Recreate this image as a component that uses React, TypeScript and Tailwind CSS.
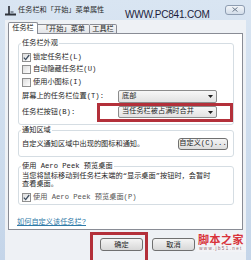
import React from "react";

const SONG = "font-['Liberation_Mono','Noto_Sans_CJK_SC',monospace]";
const UI = "font-['Noto_Sans_CJK_SC','Noto_Sans',sans-serif]";

function Check({ checked }: { checked?: boolean }) {
  return (
    <span className="w-[9px] h-[9px] border border-[#8f8f8f] bg-linear-to-br from-[#dcdcdc] to-white flex items-center justify-center shrink-0">
      {checked && (
        <svg width="7" height="7" viewBox="0 0 7 7">
          <path d="M0.8 3.6 L2.7 5.6 L6.2 1" stroke="#3d4d60" strokeWidth="1.3" fill="none" />
        </svg>
      )}
    </span>
  );
}

function Combo({ text }: { text: string }) {
  return (
    <div className="w-[99px] h-full border border-[#8c8c8c] rounded-[2px] bg-linear-to-b from-[#f7f7f7] to-[#e2e2e2] flex items-center pl-[3px] pr-[3px]">
      <span className="flex-1 leading-none">{text}</span>
      <svg width="5" height="3" viewBox="0 0 5 3">
        <path d="M0 0 H5 L2.5 3 Z" fill="#1e1e1e" />
      </svg>
    </div>
  );
}

function Group({ label, className, children }: { label: string; className: string; children: React.ReactNode }) {
  return (
    <div className={"relative border border-[#d5dde3] rounded-[3px] " + className}>
      <span className="absolute left-[2px] -top-[5px] bg-white px-[1px] leading-[9px] whitespace-nowrap">{label}</span>
      {children}
    </div>
  );
}

export default function App() {
  return (
    <div className={"relative w-[251px] h-[260px] overflow-hidden bg-linear-to-b from-[#d9e5f2] to-[#c4d5e9] flex flex-col text-[7.2px] text-[#1e1e1e] " + SONG}>
      {/* title bar */}
      <div className="h-[20px] shrink-0 flex items-center pl-[5px] pr-[6px]">
        <svg width="11" height="11" viewBox="0 0 11 11" className="shrink-0">
          <rect x="3" y="1" width="2" height="8" fill="#4a4f58" />
          <rect x="0" y="8.5" width="11" height="2" fill="#2f343c" />
          <rect x="5.5" y="6" width="3" height="2.5" fill="#8a95a3" />
        </svg>
        <span className={"ml-[2px] text-[7.2px] text-[#2a2a2a] leading-none " + UI}>任务栏和「开始」菜单属性</span>
        <span className="absolute left-[125px] top-[10px] text-[10px] leading-none text-[#1c1c3a] font-['Liberation_Sans',sans-serif] tracking-[-0.2px]">
          WWW.PC841.COM
        </span>
        <div className="ml-auto w-[20px] h-[10px] mt-[-1px] rounded-[3px] border border-[#8e9db1] bg-linear-to-b from-[#f2f5f9] to-[#d3dde9] flex items-center justify-center">
          <svg width="6" height="5" viewBox="0 0 6 5">
            <path d="M0.5 0.5 L5.5 4.5 M5.5 0.5 L0.5 4.5" stroke="#6c7a8c" strokeWidth="1" />
          </svg>
        </div>
      </div>

      {/* dialog body */}
      <div className="flex-1 mx-[5px] bg-[#eef1f5] px-[3px] pt-[2px] flex flex-col">
        {/* tabs */}
        <div className={"flex items-end h-[12px] -mb-[1px] relative z-10 " + UI}>
          <div className="w-[30px] h-[12px] bg-white border border-b-0 border-[#898c95] rounded-t-[2px] flex items-center justify-center leading-none pb-[1px]">
            任务栏
          </div>
          <div className="w-[52px] h-[10px] bg-linear-to-b from-[#f5f5f5] to-[#e2e4e8] border border-l-0 border-[#898c95] rounded-tr-[2px] flex items-center justify-center leading-none">
            「开始」菜单
          </div>
          <div className="w-[27px] h-[10px] bg-linear-to-b from-[#f5f5f5] to-[#e2e4e8] border border-l-0 border-[#898c95] rounded-tr-[2px] flex items-center justify-center leading-none">
            工具栏
          </div>
        </div>

        {/* panel */}
        <div className="h-[197px] shrink-0 bg-white border border-[#898c95] px-[9px] pr-[8px] flex flex-col">
          <Group label="任务栏外观" className="mt-[9px] pt-[7px] pb-[6px] pl-[3px]">
            <div className="h-[12px] flex items-center gap-[2px]">
              <Check checked />
              <span>锁定任务栏(L)</span>
            </div>
            <div className="h-[13px] flex items-center gap-[2px]">
              <Check />
              <span>自动隐藏任务栏(U)</span>
            </div>
            <div className="h-[12px] flex items-center gap-[2px]">
              <Check />
              <span>使用小图标(I)</span>
            </div>
            <div className="h-[13px] mt-[2px] flex items-center">
              <span className="w-[96px]">屏幕上的任务栏位置(T):</span>
              <Combo text="底部" />
            </div>
            <div className="h-[12px] mt-[3px] flex items-center">
              <span className="w-[96px]">任务栏按钮(B):</span>
              <Combo text="当任务栏被占满时合并" />
            </div>
          </Group>

          <Group label="通知区域" className="mt-[5px] pt-[7px] pb-[6px] pl-[3px] pr-[5px]">
            <div className="h-[12px] flex items-center">
              <span className="flex-1">自定义通知区域中出现的图标和通知。</span>
              <div className="w-[50px] h-[12px] border border-[#707070] rounded-[3px] bg-linear-to-b from-[#f4f4f4] to-[#dcdcdc] flex items-center justify-center leading-none">
                自定义(C)...
              </div>
            </div>
          </Group>

          <Group label="使用 Aero Peek 预览桌面" className="mt-[9px] pt-[6px] pb-[1px] pl-[3px]">
            <div className="leading-[7.5px]">
              当您将鼠标移动到任务栏末端的“显示桌面”按钮时，会暂时
              <br />
              查看桌面。
            </div>
            <div className="h-[12px] mt-[3px] flex items-center gap-[2px] text-[#555]">
              <Check checked />
              <span>使用 Aero Peek 预览桌面(P)</span>
            </div>
          </Group>

          <div className="mt-[12px] h-[10px] -ml-[1px] flex items-center">
            <span className="text-[#2f7aa8] underline underline-offset-1">如何自定义该任务栏?</span>
          </div>
        </div>

        {/* buttons */}
        <div className="mt-[8px] flex pl-[92px] gap-[9px]">
          <div className={"w-[43px] h-[13px] border border-[#707070] rounded-[3px] bg-linear-to-b from-[#f4f4f4] to-[#d8d8d8] flex items-center justify-center leading-none " + UI}>
            确定
          </div>
          <div className={"w-[43px] h-[13px] border border-[#707070] rounded-[3px] bg-linear-to-b from-[#f4f4f4] to-[#d8d8d8] flex items-center justify-center leading-none " + UI}>
            取消
          </div>
        </div>
      </div>

      {/* annotations & watermark overlays */}
      <div className="absolute left-[97px] top-[103px] w-[136px] h-[19px] border-[3px] border-[#b3303a]" />
      <div className="absolute left-[90px] top-[232px] w-[58px] h-[32px] border-[3px] border-[#b3303a]" />
      <div className="absolute left-[196px] top-[233px] w-[50px] flex flex-col items-center bg-[#f3f4f7]/70">
        <span className={"text-[11px] leading-[13px] text-[#d8323a] font-bold tracking-[0.5px] " + UI}>脚本之家</span>
        <span className="text-[4.5px] leading-[6px] text-[#9a6a70] tracking-[1.4px] font-['Liberation_Sans',sans-serif]">www.jb51.net</span>
      </div>
    </div>
  );
}
